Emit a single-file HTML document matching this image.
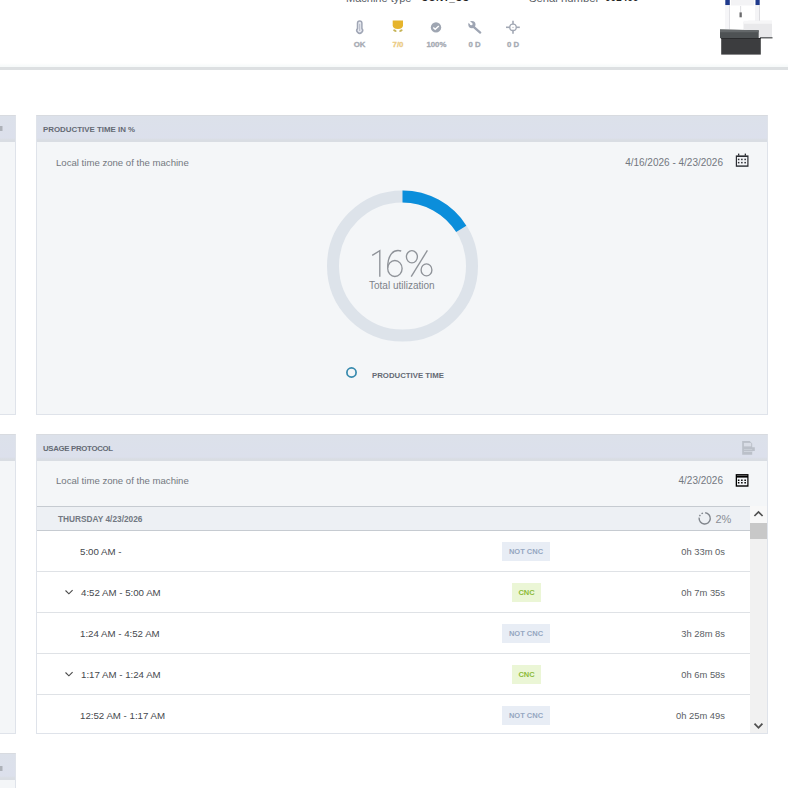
<!DOCTYPE html>
<html><head><meta charset="utf-8">
<style>
*{margin:0;padding:0;box-sizing:border-box}
html,body{width:788px;height:788px;overflow:hidden;background:#fff;font-family:"Liberation Sans",sans-serif}
.a{position:absolute;white-space:nowrap;line-height:1}
#hdr{position:absolute;left:0;top:0;width:788px;height:67px;background:linear-gradient(#fff 0,#fff 63px,#f7fafa 66px)}
#hline{position:absolute;left:0;top:67px;width:788px;height:3px;background:#dde0e2}
.card{position:absolute;background:#f4f6f8;border:1px solid #dfe3ea;border-top-color:#d8dbe0}
.chead{position:absolute;left:0;top:0;right:0;height:26px;background:linear-gradient(#dce1ea 0,#dce0ec 22px,#d9dde3 24px,#d9dde3 26px)}
.ttl{font-weight:bold;font-size:7.8px;color:#646a74}
.sub{font-size:9.6px;color:#737880}
.st{font-weight:bold;font-size:7.8px;color:#a5aab2;-webkit-text-stroke:0.3px currentColor;text-align:center;width:40px}
.row{position:absolute;left:0;width:713px;height:41px;background:#fff;border-bottom:1px solid #dfe2e6}
.tm{font-size:9.7px;color:#45484d}
.du{font-size:9.4px;color:#5a5e64;text-align:right}
.bdg{position:absolute;height:19px;font-weight:bold;font-size:7.5px;text-align:center;line-height:19px}
.nc{background:#e8edf5;color:#95a7c1}
.cn{background:#ebf6d6;color:#8cbb3a}
</style></head><body>
<div id="hdr"></div>
<div id="hline"></div>


<svg class="a" style="left:0;top:0" width="788" height="788">
  <!-- machine -->
  <rect x="731" y="0" width="23" height="5.5" fill="#f3f3f5"/>
  <rect x="725.3" y="0" width="4.5" height="5.2" fill="#1f3a8c"/>
  <rect x="755.5" y="0" width="4.2" height="5.2" fill="#1f3a8c"/>
  <rect x="725" y="5.2" width="5" height="24" fill="#f6f6f8"/>
  <rect x="729" y="5.2" width="1" height="24" fill="#e2e2e6"/>
  <rect x="755" y="5.2" width="5" height="18" fill="#f4f4f6"/>
  <rect x="759" y="5.2" width="1" height="18" fill="#dcdce0"/>
  <rect x="740.3" y="6" width="0.8" height="7" fill="#d8d8dc"/>
  <rect x="739.5" y="12.4" width="2.3" height="4.9" fill="#6a6a6c"/>
  <path d="M743.5,22 L749,20.8 H772 V38 H743.5 Z" fill="#e9e9eb"/>
  <rect x="743.5" y="20.8" width="28.5" height="3" fill="#f6f6f7"/>
  <rect x="760" y="37" width="12.5" height="1.5" fill="#6a6c6e"/>
  <path d="M720,29.4 L758.7,30.2 V38.2 H720 Z" fill="#4e5254"/>
  <path d="M720,29.4 L758.7,30.2 V32.2 H720 Z" fill="#64686a"/>
  <rect x="721.2" y="38" width="39.6" height="16.6" fill="#3c3d3f"/>
  <rect x="721.2" y="38" width="39.6" height="1" fill="#2a2b2d"/>
</svg>
<!-- top header texts (cut) -->
<div class="a" style="left:346px;top:-7.5px;font-size:11px;color:#5a5e66">Machine type</div>
<div class="a" style="left:421px;top:-7.5px;font-size:10px;font-weight:bold;color:#222">CONT_CC</div>
<div class="a" style="left:529px;top:-7.5px;font-size:11.3px;color:#5a5e66">Serial number</div>
<div class="a" style="left:605px;top:-7.5px;font-size:10px;font-weight:bold;color:#222">001466</div>

<!-- status icons -->
<div class="a st" style="left:339.5px;top:41px">OK</div>
<div class="a st" style="left:378px;top:41px;color:#ebcb84">7/0</div>
<div class="a st" style="left:416.4px;top:41px">100%</div>
<div class="a st" style="left:454.7px;top:41px">0 D</div>
<div class="a st" style="left:493px;top:41px">0 D</div>

<!-- left partial cards -->
<div class="card" style="left:-20px;top:115px;width:36px;height:300px"><div class="chead"></div></div>
<div class="card" style="left:-20px;top:434px;width:36px;height:300px"><div class="chead"></div></div>
<div class="card" style="left:-20px;top:753px;width:36px;height:100px"><div class="chead"></div></div>

<!-- productive time card -->
<div class="card" style="left:36px;top:115px;width:732px;height:300px">
  <div class="chead"></div>
</div>
<div class="a ttl" style="left:43px;top:125.6px;font-size:7.9px">PRODUCTIVE TIME IN %</div>
<div class="a sub" style="left:56px;top:157.5px">Local time zone of the machine</div>
<div class="a sub" style="left:573px;top:157.5px;width:150px;text-align:right;font-size:10px">4/16/2026 - 4/23/2026</div>

<svg class="a" style="left:0;top:0" width="788" height="788">
  <circle cx="402.5" cy="266" r="69.5" fill="none" stroke="#dde3ea" stroke-width="12"/>
  <circle cx="402.5" cy="266" r="69.5" fill="none" stroke="#0b8edb" stroke-width="12" stroke-dasharray="69.87 436.7" transform="rotate(-90 402.5 266)"/>
  <circle cx="351.5" cy="372.5" r="4.6" fill="none" stroke="#3589ad" stroke-width="1.7"/>
</svg>
<svg class="a" style="left:0;top:0" width="788" height="788"><g fill="none" stroke="#8f9399" stroke-width="1.35">
  <path d="M372.2,255.4 L379.8,250.6 V276.7"/>
  <path d="M401.2,251 C393.5,248.8 387.7,254.5 387.7,267.8"/>
  <ellipse cx="394.9" cy="268.5" rx="7.2" ry="8"/>
  <ellipse cx="411.9" cy="256.8" rx="5.5" ry="6.1"/>
  <ellipse cx="426.5" cy="269.9" rx="5.4" ry="6"/>
  <path d="M427.4,250.4 L411.2,276.6"/>
</g></svg>
<div class="a" style="left:369px;top:281px;font-size:10px;color:#7d8289">Total utilization</div>
<div class="a ttl" style="left:372px;top:371.8px">PRODUCTIVE TIME</div>

<!-- usage protocol card -->
<div class="card" style="left:36px;top:434px;width:732px;height:300px">
  <div class="chead"></div>
</div>
<div class="a ttl" style="left:43px;top:445.4px;letter-spacing:-0.3px">USAGE PROTOCOL</div>
<div class="a sub" style="left:56px;top:475.5px">Local time zone of the machine</div>
<div class="a sub" style="left:623px;top:475.5px;width:100px;text-align:right;font-size:10px">4/23/2026</div>

<div style="position:absolute;left:37px;top:506px;width:713px;height:227px;overflow:hidden">
  <div style="position:absolute;left:0;top:0;width:713px;height:25px;background:#edf0f4;border-top:1px solid #c6cbd1;border-bottom:1px solid #c6cbd1"></div>
  <div class="row" style="top:25px"></div>
  <div class="row" style="top:66px"></div>
  <div class="row" style="top:107px"></div>
  <div class="row" style="top:148px"></div>
  <div class="row" style="top:189px"></div>
</div>
<div class="a ttl" style="left:58px;top:515.4px;color:#727882;font-size:8.3px">THURSDAY 4/23/2026</div>
<div class="a" style="left:715.5px;top:514px;font-size:11px;color:#8a8e94">2%</div>

<div class="a tm" style="left:80px;top:546.5px">5:00 AM -</div>
<div class="a tm" style="left:81px;top:587.5px">4:52 AM - 5:00 AM</div>
<div class="a tm" style="left:80px;top:628.5px">1:24 AM - 4:52 AM</div>
<div class="a tm" style="left:81px;top:669.5px">1:17 AM - 1:24 AM</div>
<div class="a tm" style="left:80px;top:710.5px">12:52 AM - 1:17 AM</div>

<div class="bdg nc" style="left:502px;top:542px;width:48px">NOT CNC</div>
<div class="bdg cn" style="left:512px;top:583px;width:29px">CNC</div>
<div class="bdg nc" style="left:502px;top:624px;width:48px">NOT CNC</div>
<div class="bdg cn" style="left:512px;top:665px;width:29px">CNC</div>
<div class="bdg nc" style="left:502px;top:706px;width:48px">NOT CNC</div>

<div class="a du" style="left:625px;top:547px;width:100px">0h 33m 0s</div>
<div class="a du" style="left:625px;top:588px;width:100px">0h 7m 35s</div>
<div class="a du" style="left:625px;top:629px;width:100px">3h 28m 8s</div>
<div class="a du" style="left:625px;top:670px;width:100px">0h 6m 58s</div>
<div class="a du" style="left:625px;top:711px;width:100px">0h 25m 49s</div>

<!-- scrollbar -->
<div style="position:absolute;left:750px;top:506px;width:17px;height:227px;background:#f1f1f1"></div>
<div style="position:absolute;left:750px;top:506px;width:17px;height:17px;background:#f8f8f8"></div>
<div style="position:absolute;left:750px;top:523px;width:17px;height:16px;background:#c8c8c8"></div>


<svg class="a" style="left:0;top:0" width="788" height="788">
  <!-- thermometer -->
  <path d="M357.5,23.2 A2.2,2.2 0 0 1 361.9,23.2 V28.41 A2.9,2.9 0 1 1 357.5,28.41 Z" fill="#e9ebf2" stroke="#a0a6b5" stroke-width="1.5"/>
  <line x1="359.7" y1="23.8" x2="359.7" y2="31" stroke="#b4b9c6" stroke-width="1"/>
  <!-- yellow -->
  <path d="M392.7,20.4 H403 V25.2 Q403,28.8 397.85,28.9 Q392.7,28.8 392.7,25.2 Z" fill="#e6b42c"/>
  <ellipse cx="394.9" cy="30.6" rx="1.9" ry="1.1" fill="#c6b458" transform="rotate(30 394.9 30.6)"/>
  <ellipse cx="400.9" cy="30.6" rx="1.9" ry="1.1" fill="#c6b458" transform="rotate(-30 400.9 30.6)"/>
  <!-- check circle -->
  <circle cx="436" cy="27.4" r="5.2" fill="#9fa6b2"/>
  <path d="M433.3,27.4 L435.2,29.2 L438.8,25.9" fill="none" stroke="#fff" stroke-width="1.4"/>
  <!-- wrench -->
  <circle cx="471.9" cy="24.6" r="3.6" fill="#9ea5b3"/>
  <circle cx="471.3" cy="24" r="1.3" fill="#fff"/>
  <rect x="467" y="22.9" width="4.5" height="2.2" fill="#fff" transform="rotate(45 471.3 24)"/>
  <line x1="474.2" y1="27.3" x2="480.2" y2="32.6" stroke="#9ea5b3" stroke-width="2.3" stroke-linecap="round"/>
  <!-- crosshair -->
  <circle cx="513" cy="27.3" r="3.2" fill="none" stroke="#a2a8b4" stroke-width="1.4"/>
  <line x1="513" y1="20.8" x2="513" y2="33.8" stroke="#a2a8b4" stroke-width="1.6"/>
  <line x1="506" y1="27.3" x2="519.8" y2="27.3" stroke="#a2a8b4" stroke-width="1.6"/>
  <circle cx="513" cy="27.3" r="2.5" fill="#fff"/>
  <circle cx="513" cy="27.3" r="0.6" fill="#a2a8b4"/>
  <!-- calendar 1 -->
  <g fill="#2b2d33">
    <rect x="735.8" y="155.4" width="12.7" height="11.4"/>
    <rect x="738" y="153.6" width="1.3" height="2"/>
    <rect x="744.7" y="153.6" width="1.3" height="2"/>
  </g>
  <rect x="737" y="157" width="10.3" height="8.4" fill="#f3f5f8"/>
  <g fill="#2b2d33">
    <rect x="737.9" y="158.7" width="1.5" height="1.5"/><rect x="741.1" y="158.7" width="1.5" height="1.5"/><rect x="744.4" y="158.7" width="1.5" height="1.5"/>
    <rect x="737.9" y="161.9" width="1.5" height="1.5"/><rect x="741.1" y="161.9" width="1.5" height="1.5"/><rect x="744.4" y="161.9" width="1.5" height="1.5"/>
  </g>
  <!-- calendar 2 -->
  <rect x="735.7" y="474.1" width="12.8" height="12.6" fill="#000"/>
  <rect x="737" y="475.3" width="10.3" height="0.7" fill="#777"/>
  <rect x="737" y="477.6" width="10.3" height="7.7" fill="#f3f5f8"/>
  <g fill="#000">
    <rect x="737.9" y="479.5" width="1.5" height="1.5"/><rect x="741.1" y="479.5" width="1.5" height="1.5"/><rect x="744.4" y="479.5" width="1.5" height="1.5"/>
    <rect x="737.9" y="482" width="1.5" height="1.5"/><rect x="741.1" y="482" width="1.5" height="1.5"/><rect x="744.4" y="482" width="1.5" height="1.5"/>
  </g>
  <!-- export icon -->
  <path d="M742.2,441.1 H749.7 L752.2,443.6 V447.2 H754.8 V451.1 H752.2 V454.8 H742.2 Z" fill="#bbc0c9"/>
  <rect x="743.9" y="442.9" width="7.3" height="3.5" fill="#d9dde6"/>
  <rect x="743.9" y="449.2" width="8.3" height="0.8" fill="#cdd1da"/>
  <rect x="743.9" y="451.1" width="8.3" height="0.9" fill="#d2d6df"/>
  <!-- spinner -->
  <circle cx="704.7" cy="518.4" r="5.6" fill="none" stroke="#80858c" stroke-width="1.4" stroke-dasharray="26 1.5 1.5 1.5 1.5 3" transform="rotate(-85 704.7 518.4)"/>
  <!-- row chevrons -->
  <path d="M65.5,590.5 L68.9,593.8 L72.6,590.2" fill="none" stroke="#4a4a4a" stroke-width="1.15"/>
  <path d="M65.5,672.5 L68.9,675.8 L72.6,672.2" fill="none" stroke="#4a4a4a" stroke-width="1.15"/>
  <!-- scroll arrows -->
  <path d="M754.4,516 L758.5,511.9 L762.6,516" fill="none" stroke="#505050" stroke-width="1.7"/>
  <path d="M754.5,723.6 L758.5,727.8 L762.4,723.6" fill="none" stroke="#505050" stroke-width="1.8"/>
  <!-- left partial glyphs -->
  <rect x="0" y="126" width="2.5" height="5" fill="#aeb2b9"/>
  <rect x="0" y="766" width="2.5" height="5" fill="#aeb2b9"/>
</svg>
</body></html>
